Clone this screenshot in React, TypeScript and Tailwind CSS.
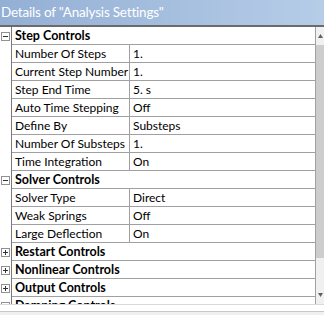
type Row =
  | { kind: "group"; label: string; open: boolean }
  | { kind: "prop"; name: string; value: string };

const rows: Row[] = [
  { kind: "group", label: "Step Controls", open: true },
  { kind: "prop", name: "Number Of Steps", value: "1." },
  { kind: "prop", name: "Current Step Number", value: "1." },
  { kind: "prop", name: "Step End Time", value: "5. s" },
  { kind: "prop", name: "Auto Time Stepping", value: "Off" },
  { kind: "prop", name: "Define By", value: "Substeps" },
  { kind: "prop", name: "Number Of Substeps", value: "1." },
  { kind: "prop", name: "Time Integration", value: "On" },
  { kind: "group", label: "Solver Controls", open: true },
  { kind: "prop", name: "Solver Type", value: "Direct" },
  { kind: "prop", name: "Weak Springs", value: "Off" },
  { kind: "prop", name: "Large Deflection", value: "On" },
  { kind: "group", label: "Restart Controls", open: false },
  { kind: "group", label: "Nonlinear Controls", open: false },
  { kind: "group", label: "Output Controls", open: false },
  { kind: "group", label: "Damping Controls", open: false },
];

const Expander = ({ open }: { open: boolean }) => (
  <div className="relative w-[9px] h-[9px] border border-[#919191] bg-white">
    <div className="absolute left-[1px] right-[1px] top-[3px] h-px bg-[#333]" />
    {!open && <div className="absolute top-[1px] bottom-[1px] left-[3px] w-px bg-[#333]" />}
  </div>
);

const App = () => {
  return (
    <div className="w-[324px] h-[315px] bg-white overflow-hidden flex flex-col font-['Lato',sans-serif] text-[12px] text-black">
      <div className="h-[25px] shrink-0 bg-gradient-to-r from-[#93afd4] to-[#b6cde8] text-white text-[13.5px] tracking-[-0.2px] leading-[25px] pl-[1px] whitespace-nowrap">
        Details of "Analysis Settings"
      </div>
      <div className="h-[2px] shrink-0 bg-[#6b6b6b]" />
      <div className="flex h-[277px] shrink-0">
        <div className="flex-1 overflow-hidden">
          {rows.map((r, i) =>
            r.kind === "group" ? (
              <div key={i} className="flex h-[18px]">
                <div className="w-[12px] shrink-0 flex items-center justify-center border-r border-[#7a7a7a]">
                  <Expander open={r.open} />
                </div>
                <div className="flex-1 border-b border-[#a0a0a0] pl-[3px] font-bold text-[12.5px] leading-[17px] whitespace-nowrap">
                  {r.label}
                </div>
              </div>
            ) : (
              <div key={i} className="flex h-[18px]">
                <div className="w-[12px] shrink-0 border-r border-[#7a7a7a]" />
                <div className="w-[118px] shrink-0 border-b border-r border-[#a0a0a0] pl-[3px] leading-[17px] whitespace-nowrap overflow-hidden">
                  {r.name}
                </div>
                <div className="flex-1 border-b border-[#a0a0a0] pl-[3px] leading-[17px] whitespace-nowrap">
                  {r.value}
                </div>
              </div>
            )
          )}
        </div>
        <div className="w-[9px] shrink-0 border-l border-[#a0a0a0] bg-[#f0f0f0] flex flex-col">
          <div className="h-[18px] flex items-center justify-end pr-[1px]">
            <svg width="5" height="4" viewBox="0 0 5 4">
              <path d="M0 4 L2.5 0 L5 4 Z" fill="#606060" />
            </svg>
          </div>
          <div className="h-[213px] bg-[#cdcdcd]" />
          <div className="flex-1" />
          <div className="h-[18px] flex items-center justify-end pr-[1px]">
            <svg width="5" height="4" viewBox="0 0 5 4">
              <path d="M0 0 L5 0 L2.5 4 Z" fill="#606060" />
            </svg>
          </div>
        </div>
      </div>
      <div className="flex-1 border-t border-[#d9d9d9] bg-white">
        <div className="h-[6px]" />
        <div className="h-full border-t border-[#c8c8c8] bg-[#f0f0f0]" />
      </div>
    </div>
  );
};

export default App;
